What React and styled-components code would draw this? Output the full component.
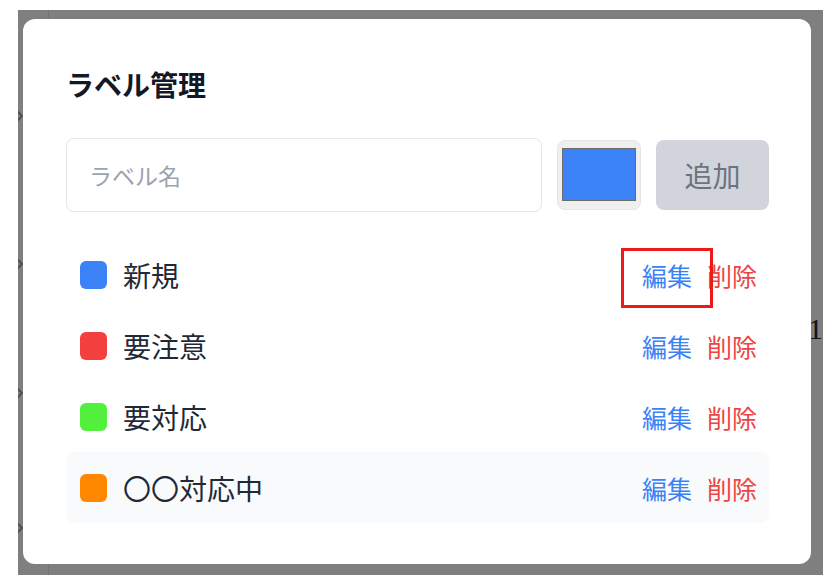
import React from "react";
import styled, { createGlobalStyle } from "styled-components";

const GlobalStyle = createGlobalStyle`
  html, body { margin: 0; padding: 0; background: #ffffff; }
  body { font-family: "Noto Sans CJK JP", "Noto Sans", sans-serif; }
  * { box-sizing: border-box; }
`;

const Frame = styled.div`
  position: relative;
  margin: 10px 0 0 18px;
  width: 805px;
  height: 565px;
  overflow: hidden;
  background: #ffffff;
`;

/* the page that lies under the dialog's backdrop */
const Underlay = styled.div`
  display: flex;
  height: 100%;
`;

const LeftCol = styled.div`
  width: 31px;
  display: flex;
  flex-direction: column;
`;

const ChevronRow = styled.div`
  height: ${(p) => p.$h}px;
  display: flex;
  align-items: center;
`;

const ChevronIcon = styled.svg`
  margin-left: -4px;
  width: 10px;
  height: 14px;
  flex: none;
`;

const Divider = styled.div`
  width: 1px;
  background: #e5e7eb;
`;

const MainCol = styled.div`
  flex: 1;
  padding: 304px 0 0 759px;
  white-space: nowrap;
`;

const CellText = styled.span`
  font-family: "Liberation Serif", serif;
  font-size: 30px;
  line-height: 30px;
  color: #1f2937;
`;

const Backdrop = styled.div`
  position: absolute;
  inset: 0;
  background: rgba(0, 0, 0, 0.5);
  display: flex;
  padding: 9px 12px 11px 5px;
`;

const Modal = styled.div`
  flex: 1;
  background: #ffffff;
  border-radius: 12px;
  padding: 47px 42px 41px 43px;
  display: flex;
  flex-direction: column;
`;

const Title = styled.h2`
  margin: 0;
  font-size: 28px;
  line-height: 36px;
  font-weight: 700;
  color: #111827;
`;

const Form = styled.div`
  margin-top: 36px;
  display: flex;
  align-items: center;
  gap: 15px;
`;

const NameInput = styled.input`
  flex: 1;
  min-width: 0;
  height: 74px;
  border: 1px solid #e5e7eb;
  border-radius: 8px;
  padding: 0 22px;
  font-family: inherit;
  font-size: 23px;
  color: #111827;
  background: #fff;
  outline: none;
  &::placeholder { color: #9ca3af; }
`;

const ColorPicker = styled.div`
  width: 84px;
  height: 70px;
  flex: none;
  background: #efefef;
  border: 1px solid #e6e6e6;
  border-radius: 8px;
  padding: 7px 4px 8px 4px;
  display: flex;
`;

const Swatch = styled.div`
  flex: 1;
  background: ${(p) => p.$color};
  border: 1px solid #6b6b6b;
`;

const AddButton = styled.button`
  width: 113px;
  height: 70px;
  flex: none;
  border: none;
  border-radius: 8px;
  background: #d1d5db;
  color: #6b7280;
  font-family: inherit;
  font-size: 28px;
  padding: 0;
`;

const List = styled.ul`
  list-style: none;
  margin: 27px 0 0 0;
  padding: 0;
  display: flex;
  flex-direction: column;
`;

const Row = styled.li`
  height: 71px;
  display: flex;
  align-items: center;
  padding: 0 12px 0 14px;
  border-radius: 8px;
  background: ${(p) => (p.$hover ? "#f8fafc" : "transparent")};
`;

const Dot = styled.span`
  width: 27px;
  height: 28px;
  border-radius: 6px;
  background: ${(p) => p.$color};
  flex: none;
`;

const Name = styled.span`
  margin-left: 16px;
  flex: 1;
  font-size: 28px;
  color: #1f2937;
`;

const Actions = styled.div`
  display: flex;
  align-items: center;
  gap: 15px;
`;

const LinkButton = styled.button`
  position: relative;
  border: none;
  background: none;
  padding: 0;
  font-family: inherit;
  font-size: 25px;
  line-height: 36px;
  color: ${(p) => (p.$danger ? "#ef4444" : "#3b82f6")};
  ${(p) =>
    p.$marked &&
    `
    &::after {
      content: "";
      position: absolute;
      left: -21px;
      right: -21px;
      top: calc(50% - 27px);
      height: 54px;
      border: 3px solid #ee1a1a;
      pointer-events: none;
      z-index: 2;
    }
  `}
`;

const labels = [
  { name: "新規", color: "#3b82f6" },
  { name: "要注意", color: "#f43f3f" },
  { name: "要対応", color: "#52f03c" },
  { name: "〇〇対応中", color: "#ff8800" },
];

const chevronRows = [212, 84, 174, 95];

export default function App() {
  return (
    <>
      <GlobalStyle />
      <Frame>
        <Underlay>
          <LeftCol>
            {chevronRows.map((h, i) => (
              <ChevronRow key={i} $h={h}>
                <ChevronIcon viewBox="0 0 10 14">
                  <polyline
                    points="2,1 8,7 2,13"
                    fill="none"
                    stroke="#9ca3af"
                    strokeWidth="2"
                    strokeLinecap="round"
                    strokeLinejoin="round"
                  />
                </ChevronIcon>
              </ChevronRow>
            ))}
          </LeftCol>
          <Divider />
          <MainCol>
            <CellText>1</CellText>
          </MainCol>
        </Underlay>
        <Backdrop>
          <Modal>
            <Title>ラベル管理</Title>
            <Form>
              <NameInput placeholder="ラベル名" />
              <ColorPicker>
                <Swatch $color="#3b82f6" />
              </ColorPicker>
              <AddButton>追加</AddButton>
            </Form>
            <List>
              {labels.map((l, i) => (
                <Row key={l.name} $hover={i === labels.length - 1}>
                  <Dot $color={l.color} />
                  <Name>{l.name}</Name>
                  <Actions>
                    <LinkButton $marked={i === 0}>編集</LinkButton>
                    <LinkButton $danger>削除</LinkButton>
                  </Actions>
                </Row>
              ))}
            </List>
          </Modal>
        </Backdrop>
      </Frame>
    </>
  );
}
